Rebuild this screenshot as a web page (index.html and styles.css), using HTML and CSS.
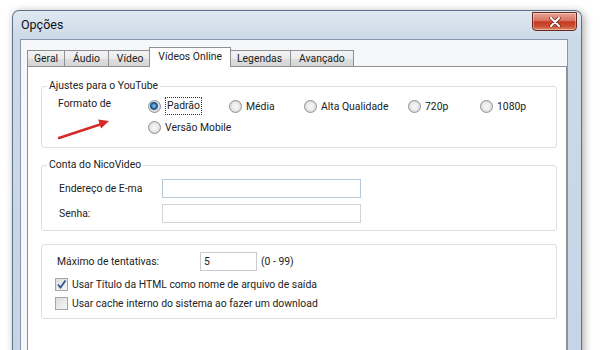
FILE: index.html
```html
<!DOCTYPE html>
<html lang="pt">
<head>
    <meta charset="UTF-8">
    <meta name="viewport" content="width=device-width, initial-scale=1.0">
    <title>Opções</title>
    <link rel="stylesheet" href="styles.css">
</head>
<body>
    <div class="window">
        <div class="titlebar">
            <span class="title">Opções</span>
            <button class="close" aria-label="Fechar">
                <svg width="12" height="10" viewBox="0 0 12 10">
                    <path d="M2 1 L10 9 M10 1 L2 9" stroke="#6b2a1c" stroke-width="3.4" stroke-linecap="round"/>
                    <path d="M2 1 L10 9 M10 1 L2 9" stroke="#ffffff" stroke-width="2" stroke-linecap="round"/>
                </svg>
            </button>
        </div>

        <div class="client">
            <div class="tabs">
                <div class="tab">Geral</div>
                <div class="tab">Áudio</div>
                <div class="tab">Vídeo</div>
                <div class="tab active">Vídeos Online</div>
                <div class="tab">Legendas</div>
                <div class="tab">Avançado</div>
            </div>

            <div class="page">
                <fieldset class="group">
                    <legend>Ajustes para o YouTube</legend>
                    <div class="group-body format">
                        <div class="format-label">
                            Formato de
                            <!-- red annotation arrow -->
                            <svg class="arrow" width="56" height="24" viewBox="0 0 56 24">
                                <path d="M1 20 L42 6.5" stroke="#d42a2a" stroke-width="2.4" stroke-linecap="round"/>
                                <polygon points="51,3 40.2,1.6 43,10.4" fill="#d42a2a"/>
                            </svg>
                        </div>
                        <div class="options">
                            <label class="option"><span class="radio checked"></span><span class="focus">Padrão</span></label>
                            <label class="option"><span class="radio"></span>Média</label>
                            <label class="option"><span class="radio"></span>Alta Qualidade</label>
                            <label class="option"><span class="radio"></span>720p</label>
                            <label class="option"><span class="radio"></span>1080p</label>
                            <label class="option"><span class="radio"></span>Versão Mobile</label>
                        </div>
                    </div>
                </fieldset>

                <fieldset class="group account">
                    <legend>Conta do NicoVideo</legend>
                    <div class="group-body">
                        <div class="form-row">
                            <span class="label">Endereço de E-ma</span>
                            <div class="field focused"></div>
                        </div>
                        <div class="form-row">
                            <span class="label">Senha:</span>
                            <div class="field"></div>
                        </div>
                    </div>
                </fieldset>

                <fieldset class="group misc">
                    <div class="group-body">
                        <div class="form-row">
                            <span class="label wide">Máximo de tentativas:</span>
                            <div class="spin">5</div>
                            <span class="range">(0 - 99)</span>
                        </div>
                        <label class="check-row">
                            <span class="checkbox checked">
                                <svg width="11" height="11" viewBox="0 0 11 11">
                                    <path d="M2 5.5 L4.5 8.5 L9.5 1.5" fill="none" stroke="#2f5597" stroke-width="1.8"/>
                                </svg>
                            </span>
                            Usar Título da HTML como nome de arquivo de saída
                        </label>
                        <label class="check-row">
                            <span class="checkbox"></span>
                            Usar cache interno do sistema ao fazer um download
                        </label>
                    </div>
                </fieldset>
            </div>
        </div>
    </div>
</body>
</html>
```

FILE: styles.css
```css
body {
    margin: 0;
    height: 350px;
    overflow: hidden;
    background: #fff;
    font-family: Roboto, "Liberation Sans", Arial, sans-serif;
    font-size: 10.4px;
    color: #222;
}

/* Aero style window frame */
.window {
    display: flex;
    flex-direction: column;
    width: 568px;
    height: 360px;
    margin: 10px 0 0 12px;
    border: 1px solid #5f7189;
    border-bottom: none;
    border-radius: 7px 7px 0 0;
    background: linear-gradient(to bottom, #e0e9f2 0, #cbd9e8 28px, #c6d5e5 100%);
    box-shadow: 2px 2px 9px rgba(0, 0, 0, 0.35);
}

.titlebar {
    display: flex;
    justify-content: space-between;
    align-items: flex-start;
    height: 28px;
    padding-left: 8px;
}

.title {
    margin-top: 6px;
    line-height: 16px;
    font-size: 12.5px;
    color: #111;
}

.close {
    display: flex;
    align-items: center;
    justify-content: center;
    width: 45px;
    height: 19px;
    margin: 1px 4px 0 0;
    padding: 0;
    border: 1px solid #6a2a1e;
    border-radius: 0 0 4px 4px;
    background: linear-gradient(to bottom, #eaa999 0, #d8705f 45%, #c33a22 52%, #cc5236 80%, #e08d72 100%);
    box-shadow: inset 0 0 0 1px rgba(255, 255, 255, 0.35);
}

.client {
    flex: 1;
    display: flex;
    flex-direction: column;
    margin: 0 13px 0 7px;
    padding: 7px 0 0 6px;
    border: 1px solid #8597ac;
    border-bottom: none;
    background: #f6f7f8;
}

/* Tabs */
.tabs {
    display: flex;
    align-items: flex-end;
}

.tab {
    height: 15px;
    line-height: 15px;
    padding: 0 8px;
    margin-left: -1px;
    border: 1px solid #8d9097;
    border-bottom: none;
    background: linear-gradient(to bottom, #f3f3f3 0, #ebebeb 50%, #dddddd 51%, #d6d6d6 100%);
    white-space: nowrap;
}

.tab:first-child {
    margin-left: 0;
    padding: 0 6px;
}

.tab.active {
    position: relative;
    z-index: 1;
    height: 19px;
    line-height: 17px;
    margin: 0 -2px -1px -3px;
    padding: 0 8px;
    background: #fff;
}

.page {
    flex: 1;
    padding: 12px 9px 0 13px;
    border: 1px solid #8d9097;
    background: #fff;
}

/* Group boxes */
.group {
    margin: 0;
    padding: 0;
    min-width: 0;
    border: 1px solid #d9dfe4;
    border-radius: 3px;
}

.group legend {
    margin-left: 5px;
    padding: 0 2px;
    line-height: 14px;
}

.account {
    margin-top: 10px;
}

.misc {
    margin-top: 13px;
}

.group-body {
    padding: 7px 0 7px 17px;
}

.format {
    display: flex;
    padding: 4px 0 11px 16px;
}

.format-label {
    position: relative;
    width: 90px;
    line-height: 14px;
}

.arrow {
    position: absolute;
    left: 0;
    top: 21px;
}

.options {
    display: grid;
    grid-template-columns: 81px 75px 104px 72px auto;
    grid-auto-rows: 18px;
    row-gap: 3px;
}

.option {
    display: flex;
    align-items: center;
    gap: 4px;
    white-space: nowrap;
}

.radio {
    flex: none;
    width: 13px;
    height: 13px;
    box-sizing: border-box;
    border-radius: 50%;
    border: 1px solid #8f9296;
    background: radial-gradient(circle at 50% 50%, #f6f6f6 0, #eeeeee 3px, #d5d6d8 6px);
}

.radio.checked {
    background: radial-gradient(circle at 45% 45%, #a9d6f2 0, #3a7fb8 2px, #1b4b7c 3.5px, #e4e5e7 4.5px, #d5d6d8 6px);
}

.focus {
    padding: 1px 1px;
    border: 1px dotted #333;
    line-height: 14px;
}

.form-row {
    display: flex;
    align-items: center;
    height: 19px;
}

.form-row + .form-row {
    margin-top: 6px;
}

.label {
    width: 103px;
    white-space: nowrap;
    overflow: hidden;
}

.field {
    width: 199px;
    height: 19px;
    box-sizing: border-box;
    border: 1px solid #d0d4d8;
}

.field.focused {
    border-color: #b4c8da;
}

/* Bottom group */
.misc .group-body {
    padding: 7px 0 6px 15px;
}

.label.wide {
    width: 143px;
}

.spin {
    width: 57px;
    height: 19px;
    box-sizing: border-box;
    padding-left: 3px;
    line-height: 17px;
    border: 1px solid #c8ccd0;
}

.range {
    margin-left: 4px;
}

.check-row {
    display: flex;
    align-items: center;
    gap: 4px;
    height: 17px;
    margin: 2px 0 0 -2px;
}

.form-row + .check-row {
    margin-top: 5px;
}

.checkbox {
    display: flex;
    align-items: center;
    justify-content: center;
    width: 13px;
    height: 13px;
    box-sizing: border-box;
    border: 1px solid #a3a6aa;
    background: linear-gradient(135deg, #dcdddf 0, #f6f6f6 100%);
}
```
